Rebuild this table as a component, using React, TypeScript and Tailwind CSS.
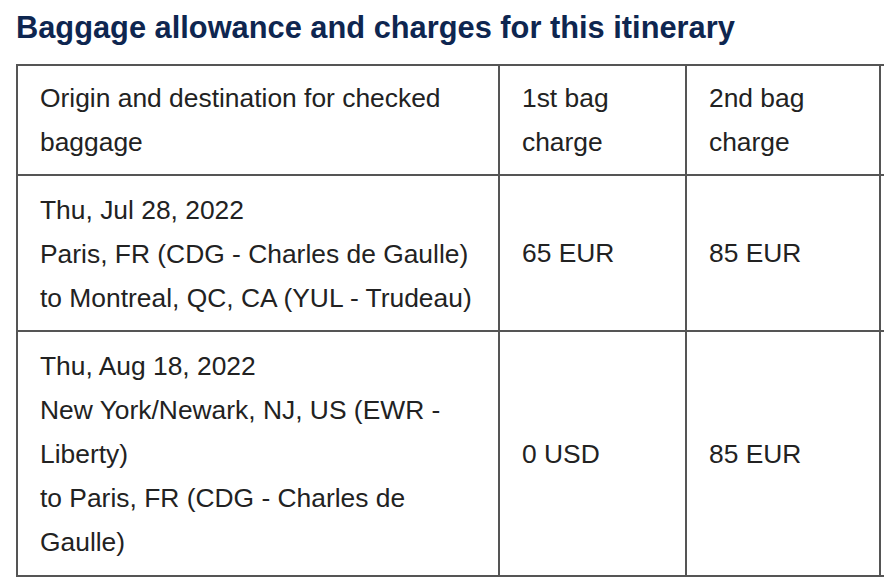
const rows = [
  {
    lines: ["Thu, Jul 28, 2022", "Paris, FR (CDG - Charles de Gaulle)", "to Montreal, QC, CA (YUL - Trudeau)"],
    first: "65 EUR",
    second: "85 EUR",
    pad: "pt-[12px] pb-[10px]",
  },
  {
    lines: ["Thu, Aug 18, 2022", "New York/Newark, NJ, US (EWR -", "Liberty)", "to Paris, FR (CDG - Charles de", "Gaulle)"],
    first: "0 USD",
    second: "85 EUR",
    pad: "pt-[12px] pb-[11px]",
  },
];

export default function App() {
  return (
    <div className="w-[884px] h-[588px] overflow-hidden bg-white font-['Liberation_Sans',Arial,sans-serif]">
      <h1 className="pl-4 pt-[10px] text-[30.8px] leading-[36px] font-bold text-[#0e2650]">
        Baggage allowance and charges for this itinerary
      </h1>
      <table className="ml-4 mt-[18px] w-[1060px] table-fixed border-collapse text-[26.4px] leading-[44px] text-[#222]">
        <thead>
          <tr>
            <th className="w-[482px] border-2 border-[#555] px-[22px] pt-[10px] pb-[10px] text-left align-middle font-normal">
              Origin and destination for checked
              <br />
              baggage
            </th>
            <th className="w-[187px] border-2 border-[#555] px-[22px] text-left align-middle font-normal">
              1st bag
              <br />
              charge
            </th>
            <th className="w-[194px] border-2 border-[#555] px-[22px] text-left align-middle font-normal">
              2nd bag
              <br />
              charge
            </th>
            <th className="border-2 border-[#555] px-[22px]"></th>
          </tr>
        </thead>
        <tbody>
          {rows.map((r, i) => (
            <tr key={i}>
              <td className={`border-2 border-[#555] px-[22px] align-middle ${r.pad}`}>
                {r.lines.map(l => (
                  <div key={l}>{l}</div>
                ))}
              </td>
              <td className="border-2 border-[#555] px-[22px] align-middle">{r.first}</td>
              <td className="border-2 border-[#555] px-[22px] align-middle">{r.second}</td>
              <td className="border-2 border-[#555] px-[22px] align-middle"></td>
            </tr>
          ))}
        </tbody>
      </table>
    </div>
  );
}
